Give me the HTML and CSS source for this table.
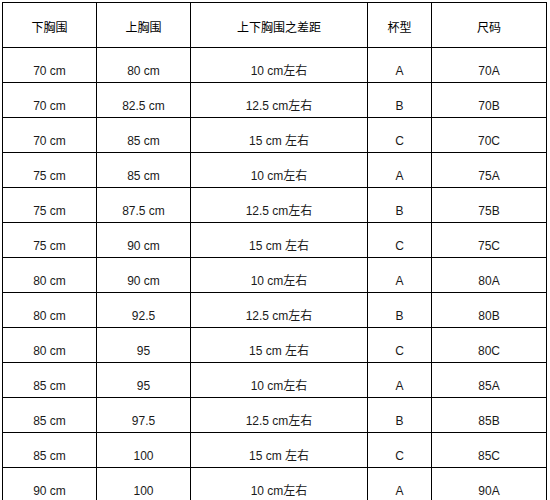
FILE: index.html
```html
<!DOCTYPE html>
<html lang="zh-CN">
<head>
<meta charset="utf-8">
<title>尺码表</title>
<link rel="stylesheet" href="styles.css">
</head>
<body>
<table class="size-table">
  <colgroup>
    <col class="c1"><col class="c2"><col class="c3"><col class="c4"><col class="c5">
  </colgroup>
  <thead>
    <tr><th>下胸围</th><th>上胸围</th><th>上下胸围之差距</th><th>杯型</th><th>尺码</th></tr>
  </thead>
  <tbody>
    <tr><td>70 cm</td><td>80 cm</td><td>10 cm左右</td><td>A</td><td>70A</td></tr>
    <tr><td>70 cm</td><td>82.5 cm</td><td>12.5 cm左右</td><td>B</td><td>70B</td></tr>
    <tr><td>70 cm</td><td>85 cm</td><td>15 cm 左右</td><td>C</td><td>70C</td></tr>
    <tr><td>75 cm</td><td>85 cm</td><td>10 cm左右</td><td>A</td><td>75A</td></tr>
    <tr><td>75 cm</td><td>87.5 cm</td><td>12.5 cm左右</td><td>B</td><td>75B</td></tr>
    <tr><td>75 cm</td><td>90 cm</td><td>15 cm 左右</td><td>C</td><td>75C</td></tr>
    <tr><td>80 cm</td><td>90 cm</td><td>10 cm左右</td><td>A</td><td>80A</td></tr>
    <tr><td>80 cm</td><td>92.5</td><td>12.5 cm左右</td><td>B</td><td>80B</td></tr>
    <tr><td>80 cm</td><td>95</td><td>15 cm 左右</td><td>C</td><td>80C</td></tr>
    <tr><td>85 cm</td><td>95</td><td>10 cm左右</td><td>A</td><td>85A</td></tr>
    <tr><td>85 cm</td><td>97.5</td><td>12.5 cm左右</td><td>B</td><td>85B</td></tr>
    <tr><td>85 cm</td><td>100</td><td>15 cm 左右</td><td>C</td><td>85C</td></tr>
    <tr><td>90 cm</td><td>100</td><td>10 cm左右</td><td>A</td><td>90A</td></tr>
  </tbody>
</table>
</body>
</html>
```
FILE: styles.css
```css
html, body {
  margin: 0;
  padding: 0;
  background: #fff;
  overflow: hidden;
}
body {
  padding: 2px 0 0 2px;
  font-family: "Liberation Sans", Arial, "Noto Sans CJK SC", sans-serif;
  font-size: 12px;
  color: #1a1a1a;
}
.size-table {
  border-collapse: collapse;
  table-layout: fixed;
  width: 544px;
}
.c1 { width: 94px; }
.c2 { width: 94px; }
.c3 { width: 177px; }
.c4 { width: 64px; }
.c5 { width: 115px; }
.size-table th,
.size-table td {
  border: 1px solid #000;
  text-align: center;
  vertical-align: middle;
  font-weight: normal;
  line-height: 14px;
  padding: 0;
}
.size-table th {
  height: 45px;
  padding-top: 5px;
  box-sizing: border-box;
  color: #000;
}
.size-table td {
  height: 35px;
  padding-top: 11px;
  box-sizing: border-box;
}
```
